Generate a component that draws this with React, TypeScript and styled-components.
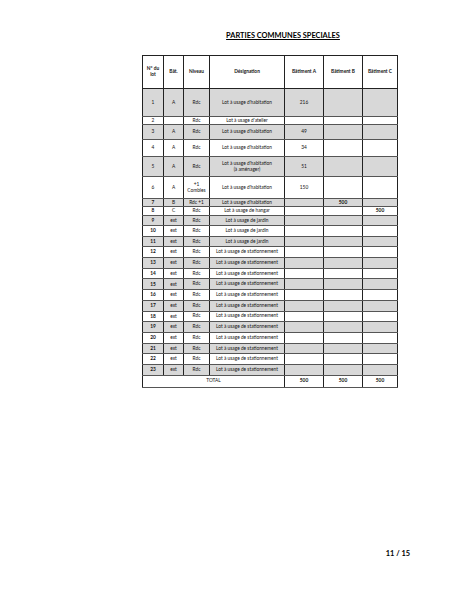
import React from 'react'
import styled, { createGlobalStyle } from 'styled-components'

const GlobalStyle = createGlobalStyle`
  html, body {
    margin: 0;
    padding: 0;
    background: #ffffff;
  }
  body {
    font-family: Lato, "Open Sans", "Liberation Sans", sans-serif;
    color: #111111;
  }
`

interface LotRow {
  num: string
  bat: string
  niveau: string[]
  designation: string[]
  a?: string
  b?: string
  c?: string
  height: number
  boldNum?: boolean
}

const rows: LotRow[] = [
  { num: '1', bat: 'A', niveau: ['Rdc'], designation: ["Lot à usage d'habitation"], a: '216', height: 28 },
  { num: '2', bat: '', niveau: ['Rdc'], designation: ["Lot à usage d'atelier"], height: 8 },
  { num: '3', bat: 'A', niveau: ['Rdc'], designation: ["Lot à usage d'habitation"], a: '49', height: 15 },
  { num: '4', bat: 'A', niveau: ['Rdc'], designation: ["Lot à usage d'habitation"], a: '34', height: 17 },
  { num: '5', bat: 'A', niveau: ['Rdc'], designation: ["Lot à usage d'habitation", '(à aménager)'], a: '51', height: 20 },
  { num: '6', bat: 'A', niveau: ['+1', 'Combles'], designation: ["Lot à usage d'habitation"], a: '150', height: 22 },
  { num: '7', bat: 'B', niveau: ['Rdc +1'], designation: ["Lot à usage d'habitation"], b: '500', height: 8, boldNum: true },
  { num: '8', bat: 'C', niveau: ['Rdc'], designation: ['Lot à usage de hangar'], c: '500', height: 9, boldNum: true },
  { num: '9', bat: 'ext', niveau: ['Rdc'], designation: ['Lot à usage de jardin'], height: 10, boldNum: true },
  { num: '10', bat: 'ext', niveau: ['Rdc'], designation: ['Lot à usage de jardin'], height: 10.7, boldNum: true },
  { num: '11', bat: 'ext', niveau: ['Rdc'], designation: ['Lot à usage de jardin'], height: 10.7, boldNum: true },
  ...['12', '13', '14', '15', '16', '17', '18', '19', '20', '21', '22', '23'].map((n) => ({
    num: n,
    bat: 'ext',
    niveau: ['Rdc'],
    designation: ['Lot à usage de stationnement'],
    height: 10.7,
    boldNum: true,
  })),
]

const columns = [21, 20, 26, 75, 39, 39, 35]

export default function App() {
  return (
    <>
      <GlobalStyle />
      <Page>
        <Column>
          <Title>PARTIES COMMUNES SPECIALES</Title>
          <LotsTable>
            <colgroup>
              {columns.map((w, i) => (
                <col key={i} style={{ width: w }} />
              ))}
            </colgroup>
            <thead>
              <HeaderRow>
                <HeadCell>
                  N° du
                  <br />
                  lot
                </HeadCell>
                <HeadCell>Bât.</HeadCell>
                <HeadCell>Niveau</HeadCell>
                <HeadCell>Désignation</HeadCell>
                <HeadCell>Bâtiment A</HeadCell>
                <HeadCell>Bâtiment B</HeadCell>
                <HeadCell>Bâtiment C</HeadCell>
              </HeaderRow>
            </thead>
            <tbody>
              {rows.map((row, i) => (
                <BodyRow key={row.num} $shaded={i % 2 === 0} style={{ height: row.height }}>
                  <Cell $bold={row.boldNum}>{row.num}</Cell>
                  <Cell>{row.bat}</Cell>
                  <Cell>
                    {row.niveau.map((l, k) => (
                      <Line key={k}>{l}</Line>
                    ))}
                  </Cell>
                  <Cell>
                    {row.designation.map((l, k) => (
                      <Line key={k}>{l}</Line>
                    ))}
                  </Cell>
                  <Cell>{row.a}</Cell>
                  <Cell $bold>{row.b}</Cell>
                  <Cell $bold>{row.c}</Cell>
                </BodyRow>
              ))}
              <TotalRow>
                <Cell colSpan={4}>TOTAL</Cell>
                <Cell $bold>500</Cell>
                <Cell $bold>500</Cell>
                <Cell $bold>500</Cell>
              </TotalRow>
            </tbody>
          </LotsTable>
        </Column>
        <Footer>
          <PageNumber>11 / 15</PageNumber>
        </Footer>
      </Page>
    </>
  )
}

const Page = styled.div`
  width: 463px;
  height: 599px;
  display: flex;
  flex-direction: column;
  background: #ffffff;
`

const Column = styled.div`
  margin-left: 142px;
  width: 282px;
  display: flex;
  flex-direction: column;
`

const Title = styled.h1`
  margin: 31px 0 0;
  text-align: center;
  font-size: 7.4px;
  line-height: 9px;
  font-weight: 700;
  text-decoration: underline;
  text-underline-offset: 1px;
  color: #000;
`

const LotsTable = styled.table`
  margin-top: 15px;
  width: 255px;
  table-layout: fixed;
  border-collapse: collapse;
  border: 1px solid #111;
  font-size: 4.8px;
  line-height: 1.15;
`

const HeaderRow = styled.tr`
  height: 33px;
`

const HeadCell = styled.th`
  border: 1px solid #222;
  padding: 0;
  font-weight: 700;
  text-align: center;
  vertical-align: middle;
`

const BodyRow = styled.tr<{ $shaded: boolean }>`
  background: ${({ $shaded }) => ($shaded ? '#d8d8d8' : '#ffffff')};
`

const TotalRow = styled.tr`
  height: 12px;
  background: #ffffff;
`

const Cell = styled.td<{ $bold?: boolean }>`
  border-left: 1px solid #222;
  border-right: 1px solid #222;
  border-top: 1px solid #555;
  border-bottom: 1px solid #555;
  padding: 0;
  text-align: center;
  vertical-align: middle;
  font-weight: ${({ $bold }) => ($bold ? 700 : 400)};
  white-space: nowrap;
  overflow: hidden;
`

const Line = styled.div`
  line-height: 1.2;
`

const Footer = styled.div`
  margin-top: auto;
  margin-bottom: 41px;
  display: flex;
  justify-content: flex-end;
  padding-right: 53px;
`

const PageNumber = styled.span`
  font-size: 7.4px;
  font-weight: 700;
  color: #000;
`
